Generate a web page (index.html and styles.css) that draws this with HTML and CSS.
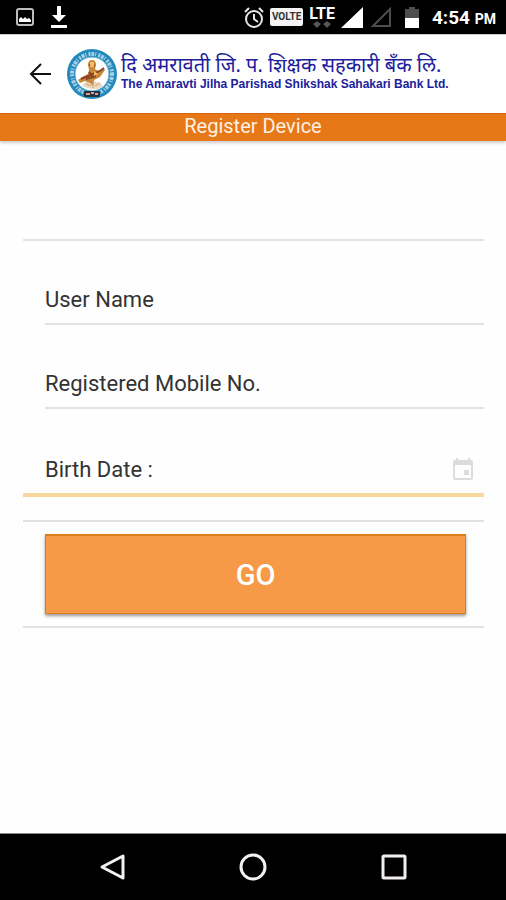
FILE: index.html
```html
<!DOCTYPE html>
<html lang="en">
<head>
<meta charset="utf-8">
<meta name="viewport" content="width=device-width, initial-scale=1">
<title>Register Device</title>
<link rel="stylesheet" href="styles.css">
</head>
<body>
<div class="status">
  <div class="status-left">
    <svg width="18" height="18" viewBox="0 0 18 18"><rect x="1" y="1" width="16" height="16" rx="2" fill="none" stroke="#bdbdbd" stroke-width="2"/><path d="M3 14v-3l2-2 2 2 2-2 2 2 2-1 2 2v2z" fill="#fff"/></svg>
    <svg width="18" height="22" viewBox="0 0 18 22"><path d="M7 0h4v9h5l-7 7-7-7h5zM1 19h16v3H1z" fill="#fff"/></svg>
  </div>
  <div class="status-right">
    <svg class="alarm" width="20" height="21" viewBox="0 0 20 21"><circle cx="10" cy="12" r="8" fill="none" stroke="#e8e8e8" stroke-width="2"/><path d="M10 7v5l4 3M1 5l4-4M19 5l-4-4" fill="none" stroke="#e8e8e8" stroke-width="2"/></svg>
    <span class="volte">VOLTE</span>
    <span class="lte">LTE<svg width="20" height="7" viewBox="0 0 20 7"><path d="M5 0l4 3-4 4-4-4zM15 0l4 3-4 4-4-4z" fill="#555"/></svg></span>
    <svg class="signal" width="22" height="21" viewBox="0 0 22 21"><path d="M22 0v21H0z" fill="#fff"/></svg>
    <svg class="signal-off" width="20" height="20" viewBox="0 0 20 20"><path d="M19 2v17H2z" fill="none" stroke="#4d4d4d" stroke-width="2"/></svg>
    <svg class="battery" width="14" height="21" viewBox="0 0 14 21"><path d="M4 0h6v2h4v10H0V2h4z" fill="#4d4d4d"/><path d="M0 11h14v10H0z" fill="#fff"/></svg>
    <span class="clock">4:54 <small>PM</small></span>
  </div>
</div>

<header class="header">
  <button class="back" type="button" aria-label="Back">
    <svg width="24" height="24" viewBox="0 0 24 24"><path d="M23 12H3M13 2L3 12l10 10" fill="none" stroke="#111" stroke-width="2"/></svg>
  </button>
  <svg class="seal" width="52" height="52" viewBox="0 0 52 52">
    <circle cx="26" cy="26" r="25" fill="#2389bd"/>
    <circle cx="26" cy="26" r="20" fill="none" stroke="#a5d0e6" stroke-width="4" stroke-dasharray="2 1 3 1 1 2"/>
    <circle cx="26" cy="26" r="17" fill="#fff" stroke="#58a9d0"/>
    <path d="M16 38q4-6 8-5l3-2 3 3q5 0 7 5-10 5-21-1z" fill="#ead9c4"/>
    <path d="M22 17q0-5 4-5t4 5l-1 4 5 3 3-4 2 2-5 7-6 3-1 6-3-3-5-2-5 2-2-3 6-4 4-2 1-4z" fill="#c98738"/>
    <path d="M15 31l19-8 4-3M23 17l6 1M23 24l5 6M20 31l10-3" fill="none" stroke="#8c4526" stroke-width="2"/>
    <path d="M24 14h4v5h-4zM28 23l4 3-4 2z" fill="#f4bc67"/>
    <path d="M27 31v9M20 36l5 2M34 35l-5 3" stroke="#d2a15e" stroke-width="1"/>
    <rect x="18" y="43" width="16" height="6" rx="1" fill="#25343e"/><path d="M20 46h4m1-1h3m1 1h3" stroke="#df9c86" stroke-width="2"/>
  </svg>
  <div class="brand">
    <span class="brand-mr" lang="mr">दि अमरावती जि. प. शिक्षक सहकारी बँक लि.</span>
    <span class="brand-en">The Amaravti Jilha Parishad Shikshak Sahakari Bank Ltd.</span>
  </div>
</header>
<h1 class="title">Register Device</h1>

<main class="content">
  <form class="form">
    <div class="row"><label for="user">User Name</label><input id="user" type="text"></div>
    <div class="row"><label for="mobile">Registered Mobile No.</label><input id="mobile" type="tel"></div>
    <div class="row row-date"><label for="birth">Birth Date :</label><input id="birth" type="text">
      <button class="pick" type="button" aria-label="Choose date"><svg width="22" height="22" viewBox="0 0 22 22"><path d="M4 0h2v2h10V0h2v2h1q2 0 2 2v16q0 2-2 2H3q-2 0-2-2V4q0-2 2-2h1zM3 7v13h16V7zM12 12h5v5h-5z" fill="#dcdcdc" fill-rule="evenodd"/></svg></button>
    </div>
    <div class="actions"><button class="go" type="button">GO</button></div>
  </form>
</main>

<nav class="nav">
  <button type="button" aria-label="Back"><svg width="28" height="28" viewBox="0 0 28 28"><path d="M25 3v22L4 14z" fill="none" stroke="#f2f2f2" stroke-width="3" stroke-linejoin="round"/></svg></button>
  <button type="button" aria-label="Home"><svg width="28" height="28" viewBox="0 0 28 28"><circle cx="14" cy="14" r="12" fill="none" stroke="#f2f2f2" stroke-width="3"/></svg></button>
  <button type="button" aria-label="Recent apps"><svg width="28" height="28" viewBox="0 0 28 28"><rect x="3" y="3" width="22" height="22" rx="1" fill="none" stroke="#f2eef0" stroke-width="3"/></svg></button>
</nav>
</body>
</html>
```
FILE: styles.css
```css
* { box-sizing: border-box; }
body {
  margin: 0;
  min-height: 100vh;
  display: flex;
  flex-direction: column;
  background: #fefefe;
  color: #333;
  font-family: Roboto, "Liberation Sans", sans-serif;
}
button { border: 0; padding: 0; background: none; font: inherit; cursor: pointer; }
svg { display: block; flex: none; }

.status {
  display: flex;
  justify-content: space-between;
  align-items: center;
  height: 34px;
  padding: 0 10px 0 16px;
  background: #000;
  color: #fff;
}
.status-left, .status-right { display: flex; align-items: center; }
.status-left { gap: 16px; }
.status-right { gap: 6px; }
.volte {
  width: 33px;
  border-radius: 2px;
  background: #f4f4f4;
  color: #333;
  font-size: 10px;
  font-weight: 700;
  line-height: 18px;
  text-align: center;
}
.lte {
  display: flex;
  flex-direction: column;
  align-items: center;
  font-size: 16px;
  font-weight: 700;
  line-height: 15px;
}
.signal-off { margin-left: 2px; }
.battery { margin-left: 8px; }
.clock { margin-left: 7px; font-size: 19px; font-weight: 700; white-space: nowrap; }
.clock small { font-size: 14px; }

.header {
  display: flex;
  align-items: center;
  height: 79px;
  padding-left: 28px;
  border-top: 1px solid #ccc;
  background: #fff;
}
.seal { margin-left: 14px; }
.brand {
  display: flex;
  flex-direction: column;
  margin-left: 3px;
  padding-bottom: 4px;
  color: #20209c;
  white-space: nowrap;
}
.brand-mr { font-family: "Noto Sans", "Noto Sans Devanagari", sans-serif; font-size: 20px; line-height: 24px; }
.brand-en { font-family: "Liberation Sans", sans-serif; font-size: 12px; font-weight: 700; line-height: 14px; }

.title {
  margin: 0;
  border-top: 1px solid #d4650c;
  padding-bottom: 2px;
  background: #e67817;
  box-shadow: 0 2px 3px #0003;
  color: #fff0e4;
  font-size: 20px;
  font-weight: 400;
  line-height: 25px;
  text-align: center;
}

.content { flex: 1; padding: 98px 22px 0 23px; }
.form { border-top: 2px solid #e2e2e2; }
.row {
  display: flex;
  align-items: flex-end;
  height: 84px;
  margin-left: 22px;
  padding-bottom: 9px;
  border-bottom: 2px solid #e2e2e2;
  font-size: 22px;
  line-height: 28px;
}
.row label { white-space: nowrap; }
.row input {
  flex: 1;
  min-width: 0;
  height: 28px;
  border: 0;
  padding: 0 8px;
  background: none;
  font: inherit;
  outline: 0;
}
.row-date {
  height: 88px;
  margin-left: 0;
  padding: 0 10px 9px 22px;
  border-bottom: 4px solid #f9d8a0;
}
.pick { padding-bottom: 4px; }
.actions {
  margin-top: 23px;
  padding: 12px 18px 12px 22px;
  border: solid #e2e2e2;
  border-width: 2px 0;
}
.go {
  display: block;
  width: 100%;
  height: 80px;
  border: solid #dc7d1c;
  border-width: 2px 1px 1px;
  background: #f69a48;
  box-shadow: 0 2px 3px #0006;
  color: #fff;
  font-size: 29px;
  font-weight: 500;
}

.nav {
  display: flex;
  justify-content: center;
  align-items: center;
  gap: 113px;
  height: 67px;
  border-top: 1px solid #888;
  background: #000;
}
```
